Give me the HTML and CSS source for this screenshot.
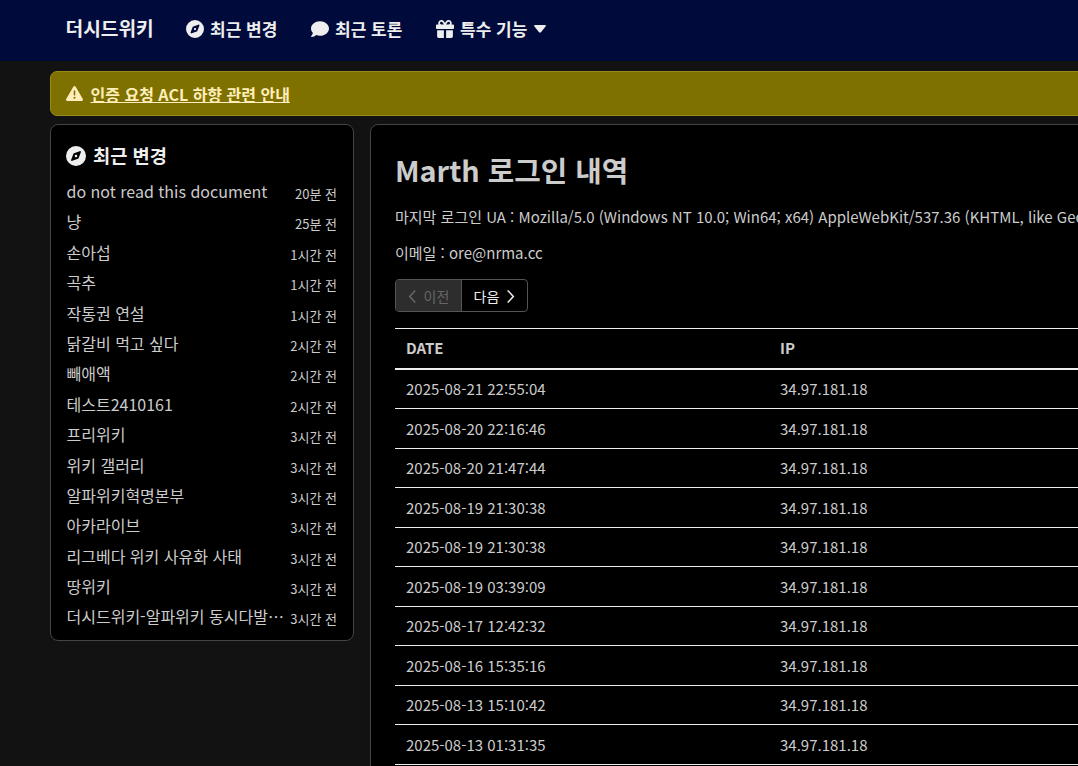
FILE: index.html
```html
<!DOCTYPE html>
<html lang="ko">
<head>
    <meta charset="UTF-8">
    <meta name="viewport" content="width=device-width, initial-scale=1.0">
    <title>Marth 로그인 내역 - 더시드위키</title>
    <link rel="stylesheet" href="styles.css">
</head>
<body>
    <nav class="navbar">
        <a class="brand" href="#">더시드위키</a>
        <a class="nav-link nav-recent" href="#">
            <svg class="icon" viewBox="0 0 512 512"><path fill-rule="evenodd" d="M256 0a256 256 0 1 0 0 512a256 256 0 1 0 0-512zM307 325L163 380c-19 8-38-11-31-31l55-143c3-9 10-16 19-19l143-55c20-7 39 12 31 31l-55 143c-3 9-9 16-18 19zM256 224a32 32 0 1 0 0 64a32 32 0 1 0 0-64z"/></svg>
            <span>최근 변경</span>
        </a>
        <a class="nav-link nav-discuss" href="#">
            <svg class="icon" viewBox="0 0 512 512"><path d="M512 240c0 115-115 208-256 208c-37 0-72-6-104-18c-12 9-31 21-54 30C74 471 45 480 16 480c-15 0-21-17-11-27c15-17 42-51 50-84C20 334 0 289 0 240C0 125 115 32 256 32s256 93 256 208z"/></svg>
            <span>최근 토론</span>
        </a>
        <a class="nav-link nav-special" href="#">
            <svg class="icon" viewBox="0 0 512 512"><path fill-rule="evenodd" d="M191 69L225 128H152c-22 0-40-18-40-40s18-40 40-40h2c15 0 30 8 37 21zM64 88c0 14 4 28 10 40H32c-18 0-32 14-32 32v64c0 18 14 32 32 32h448c18 0 32-14 32-32v-64c0-18-14-32-32-32h-42c6-12 10-26 10-40c0-49-39-88-88-88h-2c-32 0-62 17-78 44l-24 42l-24-42C216 17 186 0 154 0h-2c-49 0-88 39-88 88zM400 88c0 22-18 40-40 40h-73l34-59c8-13 22-21 37-21h2c22 0 40 18 40 40zM32 288v176c0 27 21 48 48 48h144V288zM288 512h144c27 0 48-21 48-48V288H288z"/></svg>
            <span>특수 기능</span>
            <svg class="caret" viewBox="0 0 12 8"><path d="M1 0h10q1.500 0.400 0.500 1.600L7 7.200Q6 8 5 7.200L0.500 1.600Q-0.500 0.400 1 0z"/></svg>
        </a>
    </nav>

    <div class="notice">
        <svg class="notice-icon" viewBox="0 0 512 512"><path fill-rule="evenodd" d="M256 32c14 0 27 8 35 20l216 368c7 12 7 27 0 40s-20 20-35 20H40c-15 0-28-8-35-20s-7-28 0-40L221 52c8-12 21-20 35-20zM256 160c-13 0-24 11-24 24v112c0 13 11 24 24 24s24-11 24-24V184c0-13-11-24-24-24zM256 352a32 32 0 1 0 0 64a32 32 0 1 0 0-64z"/></svg>
        <a href="#">인증 요청 ACL 하향 관련 안내</a>
    </div>

    <div class="container">
        <aside class="sidebar">
            <h2 class="sidebar-title">
                <svg class="icon" viewBox="0 0 512 512"><path fill-rule="evenodd" d="M256 0a256 256 0 1 0 0 512a256 256 0 1 0 0-512zM307 325L163 380c-19 8-38-11-31-31l55-143c3-9 10-16 19-19l143-55c20-7 39 12 31 31l-55 143c-3 9-9 16-18 19zM256 224a32 32 0 1 0 0 64a32 32 0 1 0 0-64z"/></svg>
                <span>최근 변경</span>
            </h2>
            <ul class="recent-list">
                <li><a href="#">do not read this document</a><time>20분 전</time></li>
                <li><a href="#">냥</a><time>25분 전</time></li>
                <li><a href="#">손아섭</a><time>1시간 전</time></li>
                <li><a href="#">곡추</a><time>1시간 전</time></li>
                <li><a href="#">작통권 연설</a><time>1시간 전</time></li>
                <li><a href="#">닭갈비 먹고 싶다</a><time>2시간 전</time></li>
                <li><a href="#">빼애액</a><time>2시간 전</time></li>
                <li><a href="#">테스트2410161</a><time>2시간 전</time></li>
                <li><a href="#">프리위키</a><time>3시간 전</time></li>
                <li><a href="#">위키 갤러리</a><time>3시간 전</time></li>
                <li><a href="#">알파위키혁명본부</a><time>3시간 전</time></li>
                <li><a href="#">아카라이브</a><time>3시간 전</time></li>
                <li><a href="#">리그베다 위키 사유화 사태</a><time>3시간 전</time></li>
                <li><a href="#">땅위키</a><time>3시간 전</time></li>
                <li><a href="#">더시드위키-알파위키 동시다발⋯</a><time>3시간 전</time></li>
            </ul>
        </aside>

        <main class="content">
            <h1>Marth 로그인 내역</h1>
            <p>마지막 로그인 UA : Mozilla/5.0 (Windows NT 10.0; Win64; x64) AppleWebKit/537.36 (KHTML, like Gecko) Chrome/139.0.0.0 Safari/537.36</p>
            <p>이메일 : ore@nrma.cc</p>

            <div class="btn-group">
                <a class="btn disabled">
                    <svg class="chevron" viewBox="0 0 8 14"><path d="M7 1L1.500 7L7 13"/></svg>
                    <span>이전</span>
                </a>
                <a class="btn" href="#">
                    <span>다음</span>
                    <svg class="chevron" viewBox="0 0 8 14"><path d="M1 1L6.500 7L1 13"/></svg>
                </a>
            </div>

            <table class="history-table">
                <thead>
                    <tr><th class="col-date">DATE</th><th>IP</th></tr>
                </thead>
                <tbody>
                    <tr><td>2025-08-21 22:55:04</td><td>34.97.181.18</td></tr>
                    <tr><td>2025-08-20 22:16:46</td><td>34.97.181.18</td></tr>
                    <tr><td>2025-08-20 21:47:44</td><td>34.97.181.18</td></tr>
                    <tr><td>2025-08-19 21:30:38</td><td>34.97.181.18</td></tr>
                    <tr><td>2025-08-19 21:30:38</td><td>34.97.181.18</td></tr>
                    <tr><td>2025-08-19 03:39:09</td><td>34.97.181.18</td></tr>
                    <tr><td>2025-08-17 12:42:32</td><td>34.97.181.18</td></tr>
                    <tr><td>2025-08-16 15:35:16</td><td>34.97.181.18</td></tr>
                    <tr><td>2025-08-13 15:10:42</td><td>34.97.181.18</td></tr>
                    <tr><td>2025-08-13 01:31:35</td><td>34.97.181.18</td></tr>
                </tbody>
            </table>
        </main>
    </div>
</body>
</html>
```
FILE: styles.css
```css
* {
    box-sizing: border-box;
}
body {
    margin: 0;
    height: 766px;
    overflow: hidden;
    background-color: #121212;
    color: #ccc;
    font-family: "Noto Sans CJK KR", sans-serif;
    font-size: 15px;
    line-height: 1.5;
}
a {
    color: inherit;
    text-decoration: none;
}
svg {
    fill: currentColor;
    flex: none;
}

/* Top bar */
.navbar {
    display: flex;
    align-items: center;
    height: 61px;
    padding: 0 0 4px 65.500px;
    background-color: #000b3c;
    color: #eee;
    font-weight: bold;
    white-space: nowrap;
}
.brand {
    width: 120px;
    font-size: 19.200px;
}
.nav-link {
    display: flex;
    align-items: center;
    width: 125px;
    font-size: 17px;
    line-height: 24px;
}
.nav-link .icon {
    width: 18px;
    height: 18px;
    margin-right: 6.500px;
}
.caret {
    width: 12px;
    height: 8px;
    margin-left: 7px;
}

/* Notice */
.notice {
    display: flex;
    align-items: center;
    height: 45px;
    margin: 10px 0 8px 50px;
    padding-left: 15px;
    width: 1200px;
    background-color: #7e7100;
    border: 1px solid #978a1b;
    border-radius: 7px;
    color: #ffeeba;
    font-size: 16px;
    font-weight: bold;
}
.notice a {
    text-decoration: underline;
}
.notice-icon {
    width: 17px;
    height: 17px;
    margin-right: 7.500px;
}

.container {
    display: flex;
    align-items: flex-start;
    gap: 16px;
    width: 1400px;
    padding-left: 50px;
}

/* Recent changes */
.sidebar {
    width: 304px;
    height: 517px;
    padding: 15px 16px 0 15px;
    background-color: #000;
    border: 1px solid #444;
    border-radius: 8px;
}
.sidebar-title {
    display: flex;
    align-items: center;
    height: 31px;
    margin: 0 0 5px;
    color: #eee;
    font-size: 18.700px;
}
.sidebar-title .icon {
    width: 20px;
    height: 20px;
    margin-right: 7px;
}
.recent-list {
    margin: 0;
    padding: 0 0 0 0.500px;
    list-style: none;
}
.recent-list li {
    display: flex;
    justify-content: space-between;
    height: 30.400px;
    white-space: nowrap;
}
.recent-list a {
    font-size: 16px;
    line-height: 30px;
}
.recent-list time {
    font-size: 13px;
    line-height: 36px;
}

/* Article */
.content {
    flex: 1;
    height: 900px;
    padding: 22px 24px;
    background-color: #000;
    border: 1px solid #444;
    border-radius: 8px;
}
.content h1 {
    margin: 0 0 12px;
    font-size: 28.800px;
    line-height: 46px;
}
.content p {
    margin: 0 0 13px;
    line-height: 23px;
    white-space: nowrap;
}
.btn-group {
    display: flex;
    width: 133px;
    height: 33px;
    margin: 15px 0 16px;
    border: 1px solid #555;
    border-radius: 4px;
    overflow: hidden;
}
.btn {
    display: flex;
    flex: 1;
    align-items: center;
    justify-content: center;
    gap: 8px;
    padding-top: 1px;
    color: #eee;
    font-size: 14px;
}
.btn.disabled {
    border-right: 1px solid #555;
    background-color: #2d2d2d;
    color: #666;
}
.chevron {
    width: 8px;
    height: 13px;
    fill: none;
    stroke: currentColor;
    stroke-width: 1.700;
    stroke-linecap: round;
}
.history-table {
    width: 100%;
    border-spacing: 0;
}
.history-table th, .history-table td {
    height: 39.480px;
    padding: 1px 11px 0;
    border-bottom: 1px solid #eee;
    text-align: left;
}
.history-table th {
    height: 42px;
    padding-top: 0;
    border-top: 1px solid #eee;
    border-bottom: 2px solid #eee;
}
.col-date {
    width: 374px;
}
```
